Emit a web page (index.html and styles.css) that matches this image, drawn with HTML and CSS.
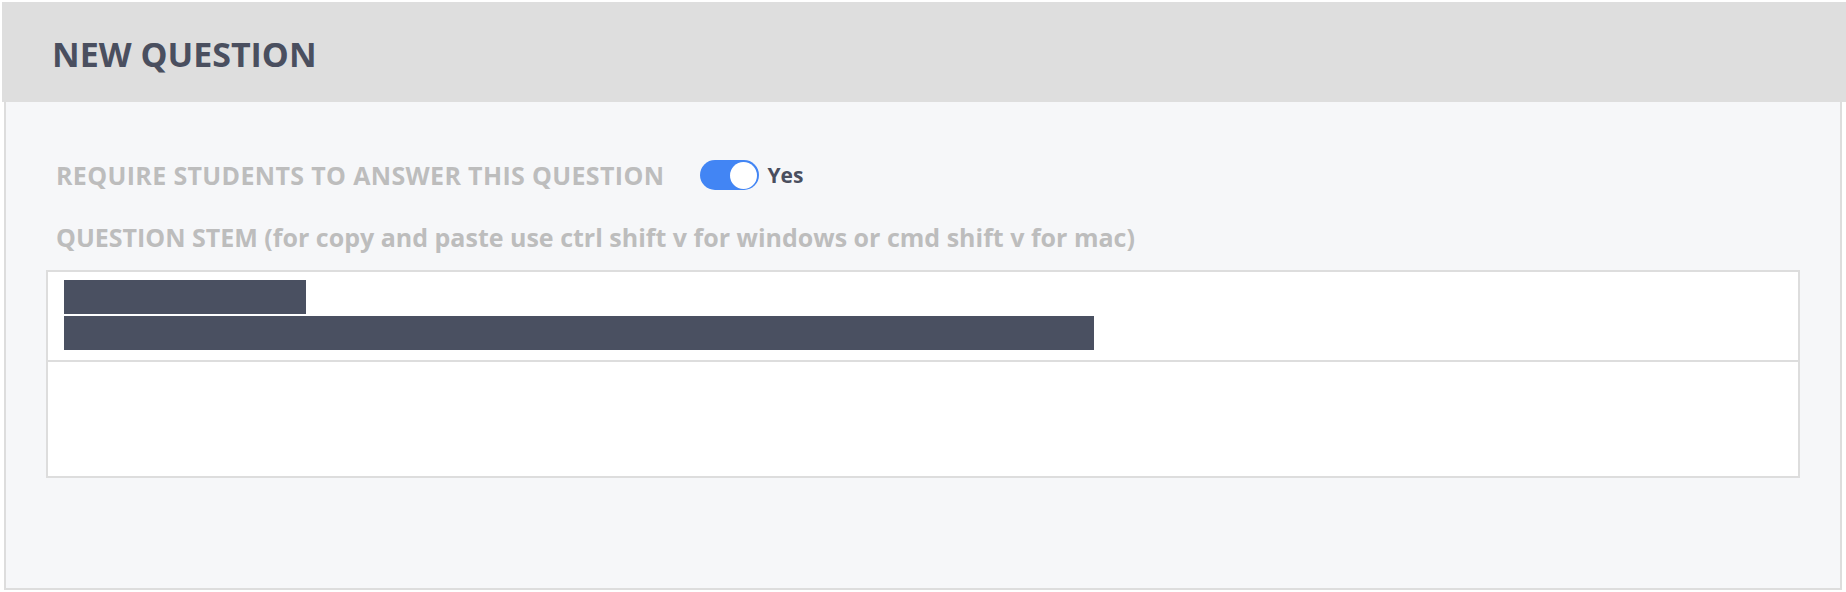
FILE: index.html
```html
<!DOCTYPE html>
<html lang="en">
<head>
<meta charset="utf-8">
<title>New Question</title>
<link rel="stylesheet" href="styles.css">
</head>
<body>
<div class="page">
  <header class="panel-head">
    <h1 class="panel-title">NEW QUESTION</h1>
  </header>
  <section class="panel-body">
    <div class="require-row">
      <span class="field-label require-label">REQUIRE STUDENTS TO ANSWER THIS QUESTION</span>
      <span class="switch" role="switch" aria-checked="true"><span class="switch-knob"></span></span>
      <span class="switch-text">Yes</span>
    </div>
    <div class="field-label stem-label">QUESTION STEM (for copy and paste use ctrl shift v for windows or cmd shift v for mac)</div>
    <div class="editor">
      <div class="editor-content">
        <div class="redacted" style="width:242px"></div>
        <div class="redacted" style="width:1030px"></div>
      </div>
      <div class="editor-extra"></div>
    </div>
  </section>
</div>
</body>
</html>
```

FILE: styles.css
```css
html, body {
  margin: 0;
  padding: 0;
  background: #ffffff;
}

body {
  font-family: "Open Sans", "Liberation Sans", sans-serif;
}

.page {
  padding: 2px 0 0 2px;
}

.panel-head {
  height: 100px;
  background: #dedede;
  box-sizing: border-box;
  padding: 30px 0 0 50px;
}

.panel-title {
  margin: 0;
  font-size: 34px;
  font-weight: 700;
  line-height: 45px;
  color: #4a4f5f;
  letter-spacing: 0;
}

.panel-body {
  margin: 0 4px 0 2px;
  background: #f6f7f9;
  border: 2px solid #dddddd;
  border-top: none;
  padding: 58px 40px 110px 40px;
}

.require-row {
  display: flex;
  align-items: center;
  height: 30px;
}

.field-label {
  font-size: 25px;
  font-weight: 700;
  line-height: 30px;
  color: #bdbdbd;
  margin-left: 10px;
  white-space: nowrap;
}

.require-label {
  letter-spacing: 0.35px;
}

.switch {
  display: flex;
  justify-content: flex-end;
  align-items: center;
  box-sizing: border-box;
  width: 59px;
  height: 30px;
  padding: 0 2px;
  margin-left: 36px;
  border-radius: 15px;
  background: #4285f4;
}

.switch-knob {
  width: 27px;
  height: 27px;
  border-radius: 50%;
  background: #ffffff;
}

.switch-text {
  margin-left: 8px;
  font-size: 21px;
  font-weight: 700;
  line-height: 30px;
  color: #4a4f5f;
}

.stem-label {
  margin-top: 32px;
}

.editor {
  margin-top: 18px;
  background: #ffffff;
  border: 2px solid #dddddd;
}

.editor-content {
  height: 90px;
  box-sizing: border-box;
  padding: 8px 16px 0 16px;
  display: flex;
  flex-direction: column;
  gap: 2px;
  border-bottom: 2px solid #dddddd;
}

.redacted {
  height: 34px;
  background: #4a5061;
}

.editor-extra {
  height: 114px;
}
```
